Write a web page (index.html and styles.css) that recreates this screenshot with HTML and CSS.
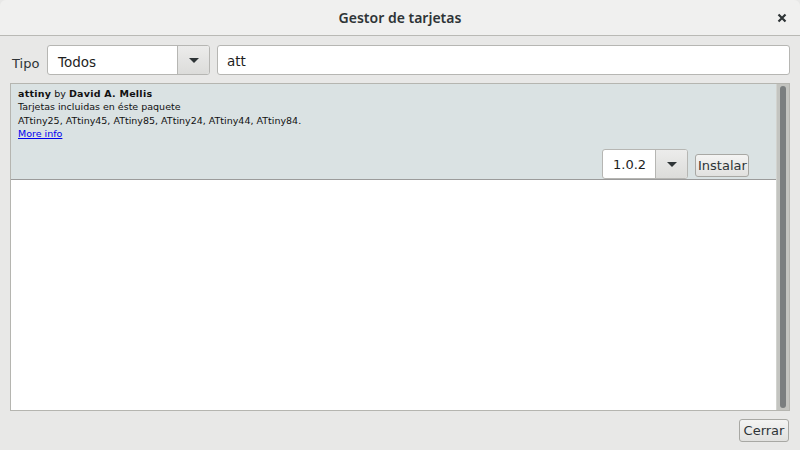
FILE: index.html
```html
<!DOCTYPE html>
<html lang="es">
<head>
<meta charset="utf-8">
<title>Gestor de tarjetas</title>
<link rel="stylesheet" href="styles.css">
</head>
<body>
<div class="window">
  <header class="titlebar">
    <span class="title">Gestor de tarjetas</span>
    <span class="close" aria-label="Cerrar">
      <svg width="10" height="10" viewBox="0 0 10 10"><path d="M1.5 1.5 L8.5 8.5 M8.5 1.5 L1.5 8.5" stroke="#2e3436" stroke-width="2.2" stroke-linecap="butt" fill="none"/></svg>
    </span>
  </header>
  <main class="content">
    <div class="filter">
      <span class="label">Tipo</span>
      <div class="combo combo-type">
        <span class="combo-text">Todos</span>
        <span class="combo-btn"><span class="arrow"></span></span>
      </div>
      <div class="search">att</div>
    </div>
    <div class="list">
      <div class="list-body">
        <div class="item">
          <div class="item-text">
            <div><b>attiny</b> by <b>David A. Mellis</b></div>
            <div>Tarjetas incluidas en éste paquete</div>
            <div>ATtiny25, ATtiny45, ATtiny85, ATtiny24, ATtiny44, ATtiny84.</div>
            <div><a href="#" class="link">More info</a></div>
          </div>
          <div class="item-actions">
            <div class="combo combo-version">
              <span class="combo-text">1.0.2</span>
              <span class="combo-btn"><span class="arrow"></span></span>
            </div>
            <button class="btn btn-install">Instalar</button>
          </div>
        </div>
      </div>
      <div class="scrollbar"><div class="thumb"></div></div>
    </div>
    <div class="footer">
      <button class="btn btn-close">Cerrar</button>
    </div>
  </main>
</div>
</body>
</html>
```
FILE: styles.css
```css
html, body {
  margin: 0;
  padding: 0;
}
body {
  width: 800px;
  height: 450px;
  overflow: hidden;
  background: #e8e8e7;
  font-family: "DejaVu Sans", sans-serif;
  color: #1e1e1e;
}
.window {
  display: flex;
  flex-direction: column;
  height: 450px;
}
.titlebar {
  height: 35px;
  border-bottom: 1px solid #b9b9b5;
  background: #f0f0ef;
  border-radius: 6px 6px 0 0;
  display: flex;
  align-items: center;
  justify-content: center;
  position: relative;
}
.title {
  font-family: "Noto Sans", sans-serif;
  font-weight: 600;
  font-size: 14px;
  color: #2e3436;
}
.close {
  position: absolute;
  right: 13px;
  top: 13px;
  width: 10px;
  height: 10px;
  display: flex;
}
.content {
  flex: 1;
  display: flex;
  flex-direction: column;
  padding: 9px 10px 0 10px;
}
.filter {
  display: flex;
  height: 30px;
  align-items: stretch;
}
.label {
  width: 37px;
  padding-left: 2px;
  box-sizing: border-box;
  font-size: 13px;
  color: #2e3436;
  height: 23px;
  margin-top: 7px;
  line-height: 24px;
  overflow: hidden;
}
.combo {
  display: flex;
  background: #fff;
  border: 1px solid #b6b6b3;
  border-radius: 3px;
  box-sizing: border-box;
  height: 30px;
}
.combo-text {
  flex: 1;
  font-size: 13.5px;
  line-height: 27px;
  padding-top: 1px;
  padding-left: 10px;
  color: #1e1e1e;
}
.combo-btn {
  width: 31px;
  border-left: 1px solid #b6b6b3;
  background: linear-gradient(#ececeb, #dcdcda);
  border-radius: 0 2px 2px 0;
  display: flex;
  align-items: center;
  justify-content: center;
}
.arrow {
  width: 0;
  height: 0;
  border-left: 5px solid transparent;
  border-right: 5px solid transparent;
  border-top: 5px solid #2e3436;
}
.combo-type {
  width: 163px;
}
.combo-type .combo-text {
  padding-top: 3px;
}
.search {
  flex: 1;
  margin-left: 7px;
  background: #fff;
  border: 1px solid #b6b6b3;
  border-radius: 3px;
  font-size: 13.5px;
  line-height: 25px;
  padding-top: 3px;
  box-sizing: border-box;
  padding-left: 9px;
  color: #1e1e1e;
}
.list {
  margin-top: 8px;
  height: 328px;
  box-sizing: border-box;
  border: 1px solid #b5b5b0;
  background: #fff;
  display: flex;
}
.list-body {
  flex: 1;
  display: flex;
  flex-direction: column;
}
.item {
  height: 96px;
  box-sizing: border-box;
  background: #dae2e3;
  border-bottom: 1px solid #9b9b9b;
  display: flex;
  flex-direction: column;
  padding: 3px 27px 0 7px;
}
.item-text {
  font-size: 9.5px;
  line-height: 13.3px;
  color: #111;
}
.item-text b {
  letter-spacing: 0.25px;
}
.link {
  color: #0000ee;
  text-decoration: underline;
}
.item-actions {
  margin-top: auto;
  display: flex;
  justify-content: flex-end;
  align-items: flex-end;
  gap: 7px;
}
.combo-version {
  width: 86px;
}
.combo-version .combo-text {
  padding-left: 10px;
  font-size: 13px;
}
.btn {
  font-family: "DejaVu Sans", sans-serif;
  font-size: 13px;
  color: #2e3436;
  background: linear-gradient(#f4f4f3, #e1e1df);
  border: 1px solid #a8a8a4;
  border-radius: 3px;
  height: 23px;
  padding: 0 2px;
  box-sizing: border-box;
  line-height: 20px;
}
.btn-install {
  width: 54px;
  margin-bottom: 2px;
}
.btn-close {
  width: 50px;
}
.scrollbar {
  width: 12px;
  background: #c3c4c0;
  border-left: 1px solid #d2d3cf;
  display: flex;
  justify-content: center;
  padding: 2px 0 2px 0;
}
.thumb {
  width: 6px;
  background: #7a7e7f;
  border-radius: 3px;
}
.footer {
  margin-top: 8px;
  display: flex;
  justify-content: flex-end;
  padding-right: 1px;
}
```
